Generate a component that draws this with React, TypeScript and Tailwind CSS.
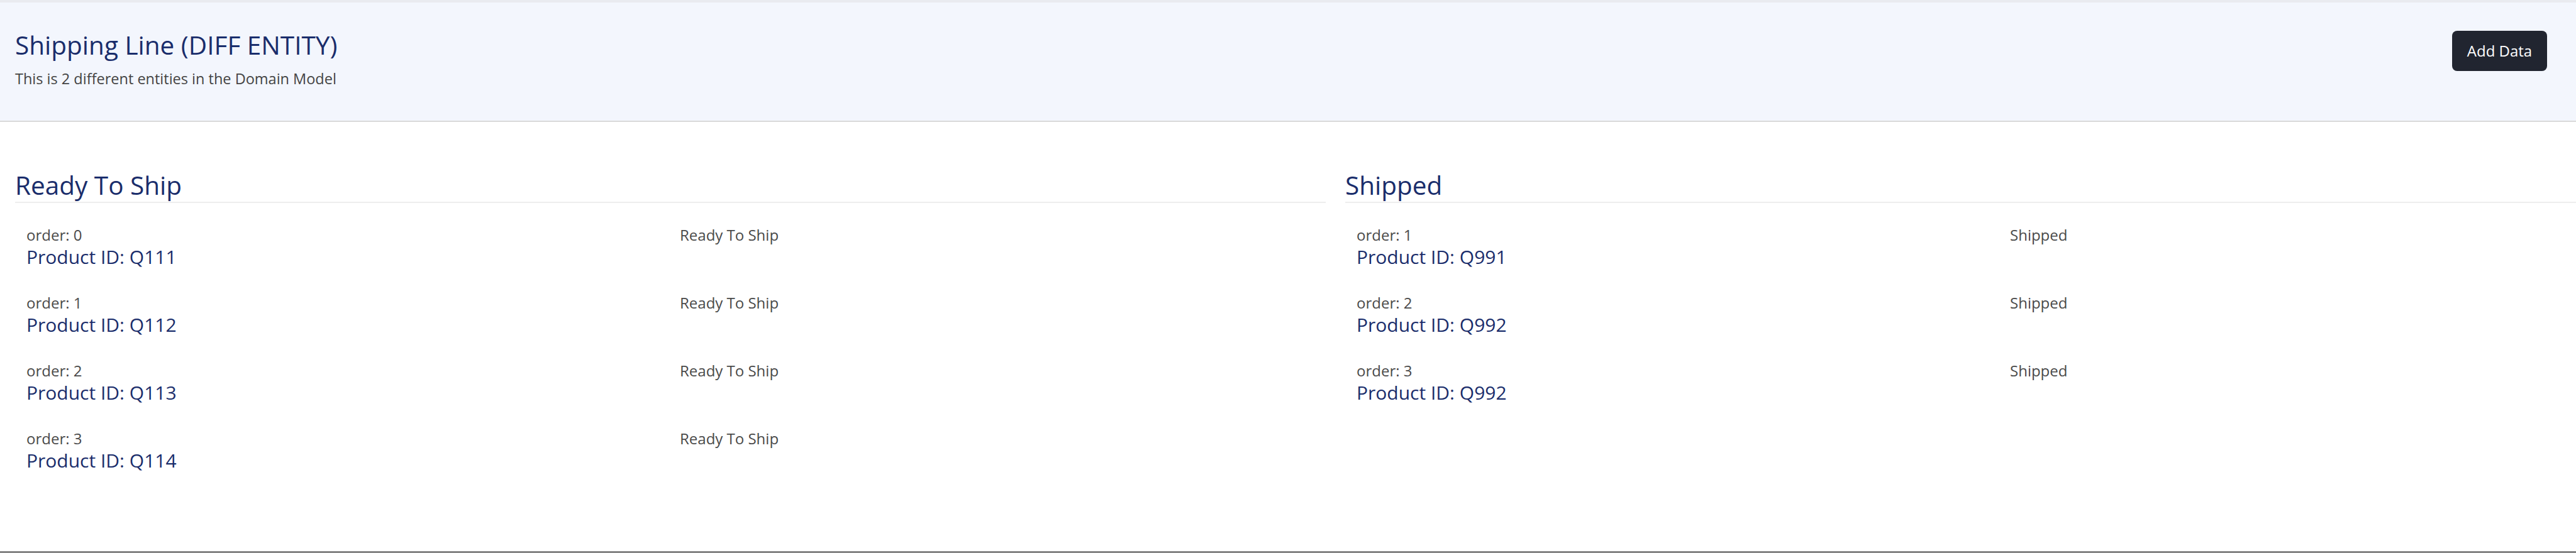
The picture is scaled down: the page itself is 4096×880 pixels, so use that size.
import React from "react";

const ready = [
  { order: 0, id: "Q111" },
  { order: 1, id: "Q112" },
  { order: 2, id: "Q113" },
  { order: 3, id: "Q114" },
];
const shipped = [
  { order: 1, id: "Q991" },
  { order: 2, id: "Q992" },
  { order: 3, id: "Q992" },
];

function Column({ title, items, status }: { title: string; items: { order: number; id: string }[]; status: string }) {
  return (
    <div className="w-[2084px] shrink-0">
      <h2 className="text-[40.5px] leading-[48px] text-[#1a2d6b] pb-[2px] border-b-2 border-[#eeeeee]">{title}</h2>
      <div className="flex flex-col gap-[37px] pt-[35px] px-[18px]">
        {items.map((it, i) => (
          <div key={i} className="grid grid-cols-[1039px_1fr]">
            <div className="flex flex-col">
              <span className="text-[24px] leading-[31px] text-[#4a4a4a]">order: {it.order}</span>
              <span className="text-[30px] leading-[40px] text-[#1a2d6b]">Product ID: {it.id}</span>
            </div>
            <span className="text-[24px] leading-[31px] text-[#4a4a4a]">{status}</span>
          </div>
        ))}
      </div>
    </div>
  );
}

export default function App() {
  return (
    <div className="h-[880px] w-[4096px] flex flex-col overflow-hidden bg-white" style={{ fontFamily: '"Open Sans", "Noto Sans", sans-serif' }}>
      <header className="h-[194px] shrink-0 border-t-4 border-t-[#e9ebf0] border-b-2 border-b-[#d9d9d9] bg-[#f3f6fd] flex items-start justify-between pl-6 pr-[46px]">
        <div className="pt-[44px]">
          <h1 className="text-[40.5px] leading-[48px] text-[#1a2d6b]">Shipping Line (DIFF ENTITY)</h1>
          <p className="mt-[14px] text-[23.5px] leading-[30px] text-[#444444]">This is 2 different entities in the Domain Model</p>
        </div>
        <button className="mt-[45px] w-[151px] h-[64px] rounded-[8px] bg-[#212530] text-white text-[24px]">Add Data</button>
      </header>
      <main className="flex-1 flex gap-[31px] pl-6 pt-[77px]">
        <Column title="Ready To Ship" items={ready} status="Ready To Ship" />
        <Column title="Shipped" items={shipped} status="Shipped" />
      </main>
      <div className="h-[3px] shrink-0 bg-[#858585]" />
    </div>
  );
}
